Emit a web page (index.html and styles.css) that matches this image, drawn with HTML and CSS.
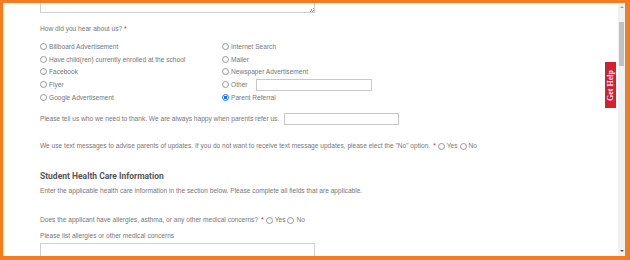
FILE: index.html
```html
<!DOCTYPE html>
<html>
<head>
<meta charset="utf-8">
<link rel="stylesheet" href="styles.css">
</head>
<body>
<div class="frame">
  <div class="viewport">
    <div class="content">
      <div class="scroll">
        <div class="textarea top-ta"><span class="grip"></span></div>

        <p class="q">How did you hear about us? <span class="req">*</span></p>
        <div class="options">
          <label class="opt"><input type="radio" name="hear"> Billboard Advertisement</label>
          <label class="opt"><input type="radio" name="hear"> Internet Search</label>
          <label class="opt"><input type="radio" name="hear"> Have child(ren) currently enrolled at the school</label>
          <label class="opt"><input type="radio" name="hear"> Mailer</label>
          <label class="opt"><input type="radio" name="hear"> Facebook</label>
          <label class="opt"><input type="radio" name="hear"> Newspaper Advertisement</label>
          <label class="opt"><input type="radio" name="hear"> Flyer</label>
          <label class="opt"><input type="radio" name="hear"> Other <span class="field other-field"></span></label>
          <label class="opt"><input type="radio" name="hear"> Google Advertisement</label>
          <label class="opt"><input type="radio" name="hear" checked> Parent Referral</label>
        </div>

        <p class="line thank">Please tell us who we need to thank. We are always happy when parents refer us. <span class="field thank-field"></span></p>

        <p class="line sms">We use text messages to advise parents of updates. If you do not want to receive text message updates, please elect the "No" option. <span class="req">*</span><label class="inl"><input type="radio" name="sms"> Yes</label><label class="inl"><input type="radio" name="sms"> No</label></p>

        <h2 class="heading">Student Health Care Information</h2>
        <p class="line enter">Enter the applicable health care information in the section below. Please complete all fields that are applicable.</p>

        <p class="line does">Does the applicant have allergies, asthma, or any other medical concerns? <span class="req">*</span><label class="inl"><input type="radio" name="med"> Yes</label><label class="inl"><input type="radio" name="med"> No</label></p>
        <p class="line list">Please list allergies or other medical concerns</p>
        <div class="textarea bottom-ta"></div>
      </div>
      <a class="gethelp"><span>Get Help</span></a>
    </div>
    <div class="scrollbar">
      <div class="arrow up"></div>
      <div class="track"><div class="thumb"></div></div>
      <div class="arrow down"></div>
    </div>
  </div>
</div>
</body>
</html>
```

FILE: styles.css
```css
* { box-sizing: border-box; }
html, body { margin: 0; padding: 0; background: #fff; }
body { width: 630px; height: 260px; overflow: hidden; font-family: "Liberation Sans", Arial, sans-serif; }

.frame {
  width: 630px;
  height: 260px;
  border-style: solid;
  border-color: #f47b20;
  border-width: 3px 5px 4px 3px;
  background: #fff;
}
.viewport { display: flex; height: 100%; }
.content { flex: 1; position: relative; overflow: hidden; }
.scroll { padding-left: 37px; font-size: 6.6px; color: #777; }

.textarea { border: 1px solid #cfcfcf; background: #fff; position: relative; }
.top-ta { width: 275px; height: 10px; border-top: none; margin-top: 0; }
.grip {
  position: absolute; right: 0; bottom: 0; width: 5px; height: 5px;
  background: linear-gradient(135deg, transparent 50%, #a0a0a0 50%, #a0a0a0 60%, transparent 60%, transparent 75%, #a0a0a0 75%, #a0a0a0 85%, transparent 85%);
}

p { margin: 0; }
.q { line-height: 12px; margin-top: 10px; }
.req { color: #d9232e; }

.options {
  display: grid;
  grid-template-columns: 182px 1fr;
  grid-auto-rows: 12.7px;
  margin-top: 5.2px;
}
.opt, .inl { display: flex; align-items: center; white-space: nowrap; }
input[type=radio] {
  -webkit-appearance: none; appearance: none;
  width: 7px; height: 7px; margin: 0 2px 0 0;
  border: 1px solid #999; border-radius: 50%; background: #fff;
  flex: none;
}
input[type=radio]:checked {
  border-color: #1a73e8;
  background: radial-gradient(circle, #1a73e8 0 45%, #fff 55%);
}
.field { display: inline-block; border: 1px solid #c8c8c8; height: 12px; background: #fff; }
.other-field { width: 116px; margin-left: 8px; }

.line { line-height: 12px; display: flex; align-items: center; white-space: nowrap; }
.thank { margin-top: 9.8px; }
.thank-field { width: 115px; margin-left: 5px; }
.sms { margin-top: 15px; }
.sms .req, .does .req { margin: 0 2px 0 3px; }
.inl { margin-left: 0; }
.inl + .inl input { margin-left: 2px; }

.heading {
  margin: 18px 0 0;
  font-family: Roboto, "Liberation Sans", sans-serif;
  font-weight: bold;
  font-size: 8.5px;
  line-height: 12px;
  color: #555;
}
.enter { margin-top: 3px; }
.does { margin-top: 17px; }
.list { margin-top: 4px; }
.bottom-ta { width: 275px; height: 30px; margin-top: 1px; }

.gethelp {
  position: absolute;
  right: 2px;
  top: 59px;
  width: 11px;
  height: 46px;
  background: #d2202f;
  display: flex; align-items: center; justify-content: center;
}
.gethelp span {
  transform: rotate(-90deg);
  white-space: nowrap;
  color: #fff;
  font-family: "Liberation Serif", serif;
  font-weight: bold;
  font-size: 8px;
}

.scrollbar { width: 7px; background: #f1f1f1; display: flex; flex-direction: column; }
.arrow { height: 9px; position: relative; }
.arrow.down::after {
  content: ""; position: absolute; left: 1.5px; top: 3px;
  border-left: 2px solid transparent; border-right: 2px solid transparent; border-top: 2.5px solid #505050;
}
.arrow.up::after {
  content: ""; position: absolute; left: 1.5px; top: 3px;
  border-left: 2px solid transparent; border-right: 2px solid transparent; border-bottom: 2.5px solid #a3a3a3;
}
.track { flex: 1; padding: 10px 1px 0; }
.thumb { height: 44px; background: #c1c1c1; }
```
